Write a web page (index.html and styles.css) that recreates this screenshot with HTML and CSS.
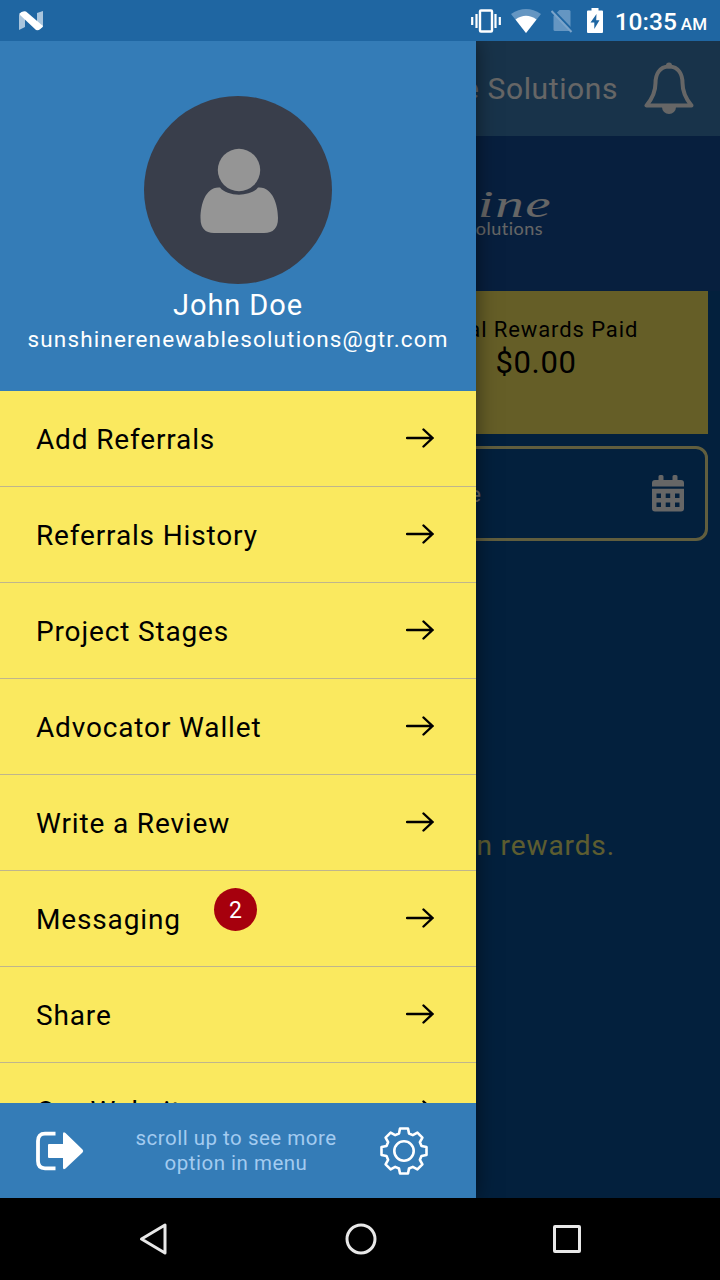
FILE: index.html
```html
<!DOCTYPE html>
<html lang="en">
  <head>
    <meta charset="UTF-8" />
    <meta name="viewport" content="width=device-width, initial-scale=1.0" />
    <title>Sunshine Renewable Solutions</title>
    <link rel="stylesheet" href="styles.css">
  </head>
  <body>
    <div class="status-bar">
      <svg class="status-logo" width="26" height="22" viewBox="0 0 26 22">
        <path d="M1 5 L7 2 V17 L1 20Z M25 1 V17 L19 20 V3Z" fill="#a9c5dd" />
        <path d="M1 4 Q4 .5 8 1.500 L25 16 Q22 21 18 20Z" fill="#fff" />
      </svg>
      <div class="status-icons">
        <svg width="30" height="24" viewBox="0 0 30 24">
          <rect x="9" y="1.500" width="12" height="21" rx="1" fill="none" stroke="#fff" stroke-width="2.400" />
          <path d="M5.500 5V19M24.500 5V19M1.200 8V16M28.800 8V16" stroke="#fff" stroke-width="2.200" />
        </svg>
        <svg width="30" height="24" viewBox="0 0 30 24">
          <path d="M0 5 Q15 -5 30 5 L15 24Z" fill="#6596c2" />
          <path d="M4.500 10.500 Q15 3 25.500 10.500 L15 24Z" fill="#fff" />
        </svg>
        <svg width="22" height="24" viewBox="0 0 22 24">
          <path d="M8.500 1 H18 Q19.500 1 19.500 2.500 V22 H4 Q2.500 22 2.500 20.500 V7Z" fill="#6596c2" />
          <path d="M1.800 1 L22 22" stroke="#1f66a2" stroke-width="2.500" />
          <path d="M.5 2 L20.500 23" stroke="#7ba4ca" stroke-width="2" />
        </svg>
        <svg width="16" height="25" viewBox="0 0 16 25">
          <path d="M4.500 0 H11.500 V2.500 H15 Q16 2.500 16 3.500 V24 Q16 25 15 25 H1 Q0 25 0 24 V3.500 Q0 2.500 1 2.500 H4.500Z" fill="#fff" />
          <path d="M9.500 6 L3.500 14.500 H7.300 V21 L12.500 12.300 H9.200Z" fill="#1f66a2" />
        </svg>
        <span class="clock">10:35</span>
        <span class="meridiem">AM</span>
      </div>
    </div>

    <div class="screen">
      <main class="page">
        <header class="page-header">
          <span class="page-title">Sunshine Renewable Solutions</span>
          <svg width="50" height="54" viewBox="0 0 50 54">
            <path d="M18 45 A7 7 0 0 0 32 45Z" fill="#fff" />
            <path d="M25 4.500 C15 4.500 11.500 13 11.500 21 C11.500 31 8 37 2.500 43.500 H47.500 C42 37 38.500 31 38.500 21 C38.500 13 35 4.500 25 4.500Z" fill="none" stroke="#fff" stroke-width="4" stroke-linejoin="round" />
            <circle cx="25" cy="3.500" r="3" fill="#fff" />
          </svg>
        </header>
        <div class="brand">
          <div class="brand-name">Sunshine</div>
          <div class="brand-sub">Renewable Solutions</div>
        </div>
        <section class="stats">
          <div class="stat">
            <div class="stat-label">Total Rewards Paid</div>
            <div class="stat-value">$0.00</div>
          </div>
        </section>
        <div class="date-field">
          <span class="date-label">Select Date</span>
          <svg width="32" height="37" viewBox="0 0 32 37">
            <path d="M6.500 5 V1.500 Q6.500 0 8 0 H10 Q11.500 0 11.500 1.500 V5 H20.500 V1.500 Q20.500 0 22 0 H24 Q25.500 0 25.500 1.500 V5 H29 Q32 5 32 8 V11.500 H0 V8 Q0 5 3 5Z" fill="#fff" />
            <path fill-rule="evenodd" d="M0 13.800 H32 V33.500 Q32 36.500 29 36.500 H3 Q0 36.500 0 33.500Z M4.500 18.500 V23 H9 V18.500Z M13.700 18.500 V23 H18.200 V18.500Z M23 18.500 V23 H27.500 V18.500Z M4.500 27.500 V32 H9 V27.500Z M13.700 27.500 V32 H18.200 V27.500Z M23 27.500 V32 H27.500 V27.500Z" fill="#fff" />
          </svg>
        </div>
        <p class="empty-text">Refer and earn rewards.</p>
      </main>
      <div class="scrim"></div>

      <aside class="drawer">
        <div class="profile">
          <div class="avatar">
            <svg width="78" height="86" viewBox="0 0 78 86">
              <circle cx="39" cy="22" r="21.200" fill="#959595" />
              <path d="M20 39.500 C27 49 51 49 58 39.500 C72 38 78 56 78 70 Q78 85 64 85 H14 Q.500 85 .500 70 C.500 56 6 38 20 39.500Z" fill="#959595" />
            </svg>
          </div>
          <div class="profile-name">John Doe</div>
          <div class="profile-email">sunshinerenewablesolutions@gtr.com</div>
        </div>

        <nav class="menu">
          <a class="menu-item"><span>Add Referrals</span><svg class="arrow" viewBox="0 0 28 20"><path d="M1 10H26.500M17.500 1.500L26.500 10L17.500 18.500" /></svg></a>
          <a class="menu-item"><span>Referrals History</span><svg class="arrow" viewBox="0 0 28 20"><path d="M1 10H26.500M17.500 1.500L26.500 10L17.500 18.500" /></svg></a>
          <a class="menu-item"><span>Project Stages</span><svg class="arrow" viewBox="0 0 28 20"><path d="M1 10H26.500M17.500 1.500L26.500 10L17.500 18.500" /></svg></a>
          <a class="menu-item"><span>Advocator Wallet</span><svg class="arrow" viewBox="0 0 28 20"><path d="M1 10H26.500M17.500 1.500L26.500 10L17.500 18.500" /></svg></a>
          <a class="menu-item"><span>Write a Review</span><svg class="arrow" viewBox="0 0 28 20"><path d="M1 10H26.500M17.500 1.500L26.500 10L17.500 18.500" /></svg></a>
          <a class="menu-item"><span>Messaging</span><b class="badge">2</b><svg class="arrow" viewBox="0 0 28 20"><path d="M1 10H26.500M17.500 1.500L26.500 10L17.500 18.500" /></svg></a>
          <a class="menu-item"><span>Share</span><svg class="arrow" viewBox="0 0 28 20"><path d="M1 10H26.500M17.500 1.500L26.500 10L17.500 18.500" /></svg></a>
          <a class="menu-item"><span>Our Website</span><svg class="arrow" viewBox="0 0 28 20"><path d="M1 10H26.500M17.500 1.500L26.500 10L17.500 18.500" /></svg></a>
        </nav>

        <div class="drawer-footer">
          <svg width="48" height="40" viewBox="0 0 48 40">
            <path d="M19.500 2.700 H9 Q2 2.700 2 10 V30 Q2 37.300 9 37.300 H19.500" fill="none" stroke="#fff" stroke-width="3.800" />
            <path d="M13 13 H27 V3 Q27 0 29.500 2 L46.500 18.500 Q48 20 46.500 21.500 L29.500 37.500 Q27 39.500 27 36.500 V27 H13 Q12 27 12 26 V14 Q12 13 13 13Z" fill="#fff" />
          </svg>
          <p class="hint">scroll up to see more<br>option in menu</p>
          <svg width="48" height="48" viewBox="-24 -24 48 48" fill="none" stroke="#fff" stroke-width="2.600" stroke-linejoin="round">
            <path d="M-4-22.500H4L5-17.500L8.800-15.900L13.400-18.400L18.400-13.400L15.900-8.800L17.500-5L22.500-4V4L17.500 5L15.900 8.800L18.400 13.400L13.400 18.400L8.800 15.900L5 17.500L4 22.500H-4L-5 17.500L-8.800 15.900L-13.400 18.400L-18.400 13.400L-15.900 8.800L-17.500 5L-22.500 4V-4L-17.500-5L-15.900-8.800L-18.400-13.400L-13.400-18.400L-8.800-15.900L-5-17.500Z" />
            <circle r="9.700" />
          </svg>
        </div>
      </aside>
    </div>

    <div class="nav-bar">
      <svg width="32" height="34" viewBox="0 0 32 34"><path d="M27 3 V31 L3.500 17Z" /></svg>
      <svg width="34" height="34" viewBox="0 0 34 34"><circle cx="17" cy="17" r="14" /></svg>
      <svg width="30" height="30" viewBox="0 0 30 30"><rect x="2.500" y="2.500" width="25" height="25" rx=".5" /></svg>
    </div>
  </body>
</html>
```
FILE: styles.css
```css
* {
  box-sizing: border-box;
}
body {
  margin: 0;
  width: 720px;
  height: 1280px;
  display: flex;
  flex-direction: column;
  overflow: hidden;
  font-family: Roboto, "Liberation Sans", sans-serif;
  background-color: #000;
}
svg {
  display: block;
  flex-shrink: 0;
}
p {
  margin: 0;
}

/* status bar */
.status-bar {
  height: 41px;
  padding: 0 13px 0 18px;
  display: flex;
  align-items: center;
  justify-content: space-between;
  background-color: #1f66a2;
  color: white;
}
.status-icons {
  display: flex;
  align-items: center;
}
.status-icons svg {
  margin-right: 10px;
}
.status-icons svg:nth-child(3) {
  margin-right: 14px;
}
.status-icons svg:nth-child(4) {
  margin-right: 12px;
}
.clock {
  padding-top: 2px;
  font-size: 24.5px;
  font-weight: 500;
  line-height: 30px;
}
.meridiem {
  font-size: 17px;
  font-weight: 500;
  margin: 6px 0 0 4px;
}

/* page behind the drawer */
.screen {
  position: relative;
  height: 1157px;
  overflow: hidden;
}
.page {
  height: 100%;
  background-color: #085099;
  color: white;
}
.page-header {
  height: 95px;
  padding-right: 26px;
  display: flex;
  align-items: center;
  justify-content: flex-end;
  gap: 26px;
  background-color: #3c80b9;
}
.page-title {
  font-size: 30px;
  letter-spacing: 0.6px;
  white-space: nowrap;
}
.brand {
  height: 155px;
  padding: 49px 177px 0 0;
  text-align: right;
  background-color: #134f9b;
}
.brand-name {
  margin-right: -9px;
  font-family: "Liberation Serif", serif;
  font-size: 38px;
  font-style: italic;
  line-height: 38px;
  letter-spacing: 1px;
  transform: scaleX(1.5);
  transform-origin: right;
}
.brand-sub {
  margin-top: -6px;
  font-family: Lato, sans-serif;
  font-size: 18px;
  line-height: 22px;
  letter-spacing: 0.5px;
}
.stats {
  height: 143px;
  margin: 0 12px;
  display: flex;
  justify-content: flex-end;
  background-color: #fdeb62;
  color: black;
}
.stat {
  width: 344px;
  padding-top: 25px;
  text-align: center;
}
.stat-label {
  font-size: 22px;
  line-height: 28px;
  letter-spacing: 0.9px;
}
.stat-value {
  font-size: 31px;
  line-height: 38px;
  letter-spacing: 0.6px;
}
.date-field {
  height: 95px;
  margin: 12px 12px 0;
  padding: 0 21px;
  display: flex;
  align-items: center;
  justify-content: flex-end;
  gap: 171px;
  border: 3px solid #f3ec9c;
  border-radius: 12px;
}
.date-label {
  padding-top: 2px;
  font-size: 22px;
}
.empty-text {
  margin-top: 287px;
  padding-right: 105px;
  text-align: right;
  font-size: 28px;
  line-height: 36px;
  letter-spacing: 0.9px;
  color: #e8e878;
}
.scrim {
  position: absolute;
  inset: 0;
  background-color: rgba(0, 0, 0, 0.6);
}

/* drawer */
.drawer {
  position: absolute;
  top: 0;
  left: 0;
  width: 476px;
  height: 100%;
  display: flex;
  flex-direction: column;
  background-color: #347cb7;
  box-shadow: 0 0 20px rgba(0, 0, 0, 0.5);
}
.profile {
  height: 350px;
  padding-top: 55px;
  display: flex;
  flex-direction: column;
  align-items: center;
  flex-shrink: 0;
  color: white;
}
.avatar {
  width: 188px;
  height: 188px;
  padding: 2px 0 0 1px;
  display: flex;
  align-items: center;
  justify-content: center;
  border-radius: 50%;
  background-color: #393e4b;
}
.profile-name {
  margin-top: 3px;
  font-size: 29px;
  line-height: 36px;
  letter-spacing: 0.9px;
}
.profile-email {
  font-size: 22.5px;
  line-height: 33px;
  letter-spacing: 1.15px;
}
.menu {
  flex: 1;
  overflow: hidden;
  background-color: #fae95f;
}
.menu-item {
  position: relative;
  height: 96px;
  padding: 0 42px 0 36px;
  display: flex;
  align-items: center;
  justify-content: space-between;
  border-bottom: 1px solid #bfb58c;
  color: black;
  font-size: 28px;
  letter-spacing: 0.85px;
}
.menu-item span {
  padding-top: 2px;
}
.arrow {
  width: 28px;
  height: 20px;
  margin-bottom: 2px;
  fill: none;
  stroke: black;
  stroke-width: 2.4;
  stroke-linecap: round;
}
.badge {
  position: absolute;
  top: 17px;
  left: 214px;
  width: 43px;
  height: 43px;
  border-radius: 50%;
  background-color: #a6000d;
  color: white;
  font-size: 23px;
  font-weight: normal;
  line-height: 45px;
  letter-spacing: 0;
  text-align: center;
}
.drawer-footer {
  height: 95px;
  padding: 0 48px 0 36px;
  display: flex;
  align-items: center;
  flex-shrink: 0;
}
.hint {
  flex: 1;
  padding-left: 8px;
  color: #a3cbf0;
  font-size: 20.5px;
  line-height: 25px;
  letter-spacing: 0.5px;
  text-align: center;
}

/* android navigation */
.nav-bar {
  height: 82px;
  padding: 0 138px 0 138px;
  display: flex;
  align-items: center;
  justify-content: space-between;
}
.nav-bar svg {
  fill: none;
  stroke: #e8e8e8;
  stroke-width: 3;
  stroke-linejoin: round;
}
```
